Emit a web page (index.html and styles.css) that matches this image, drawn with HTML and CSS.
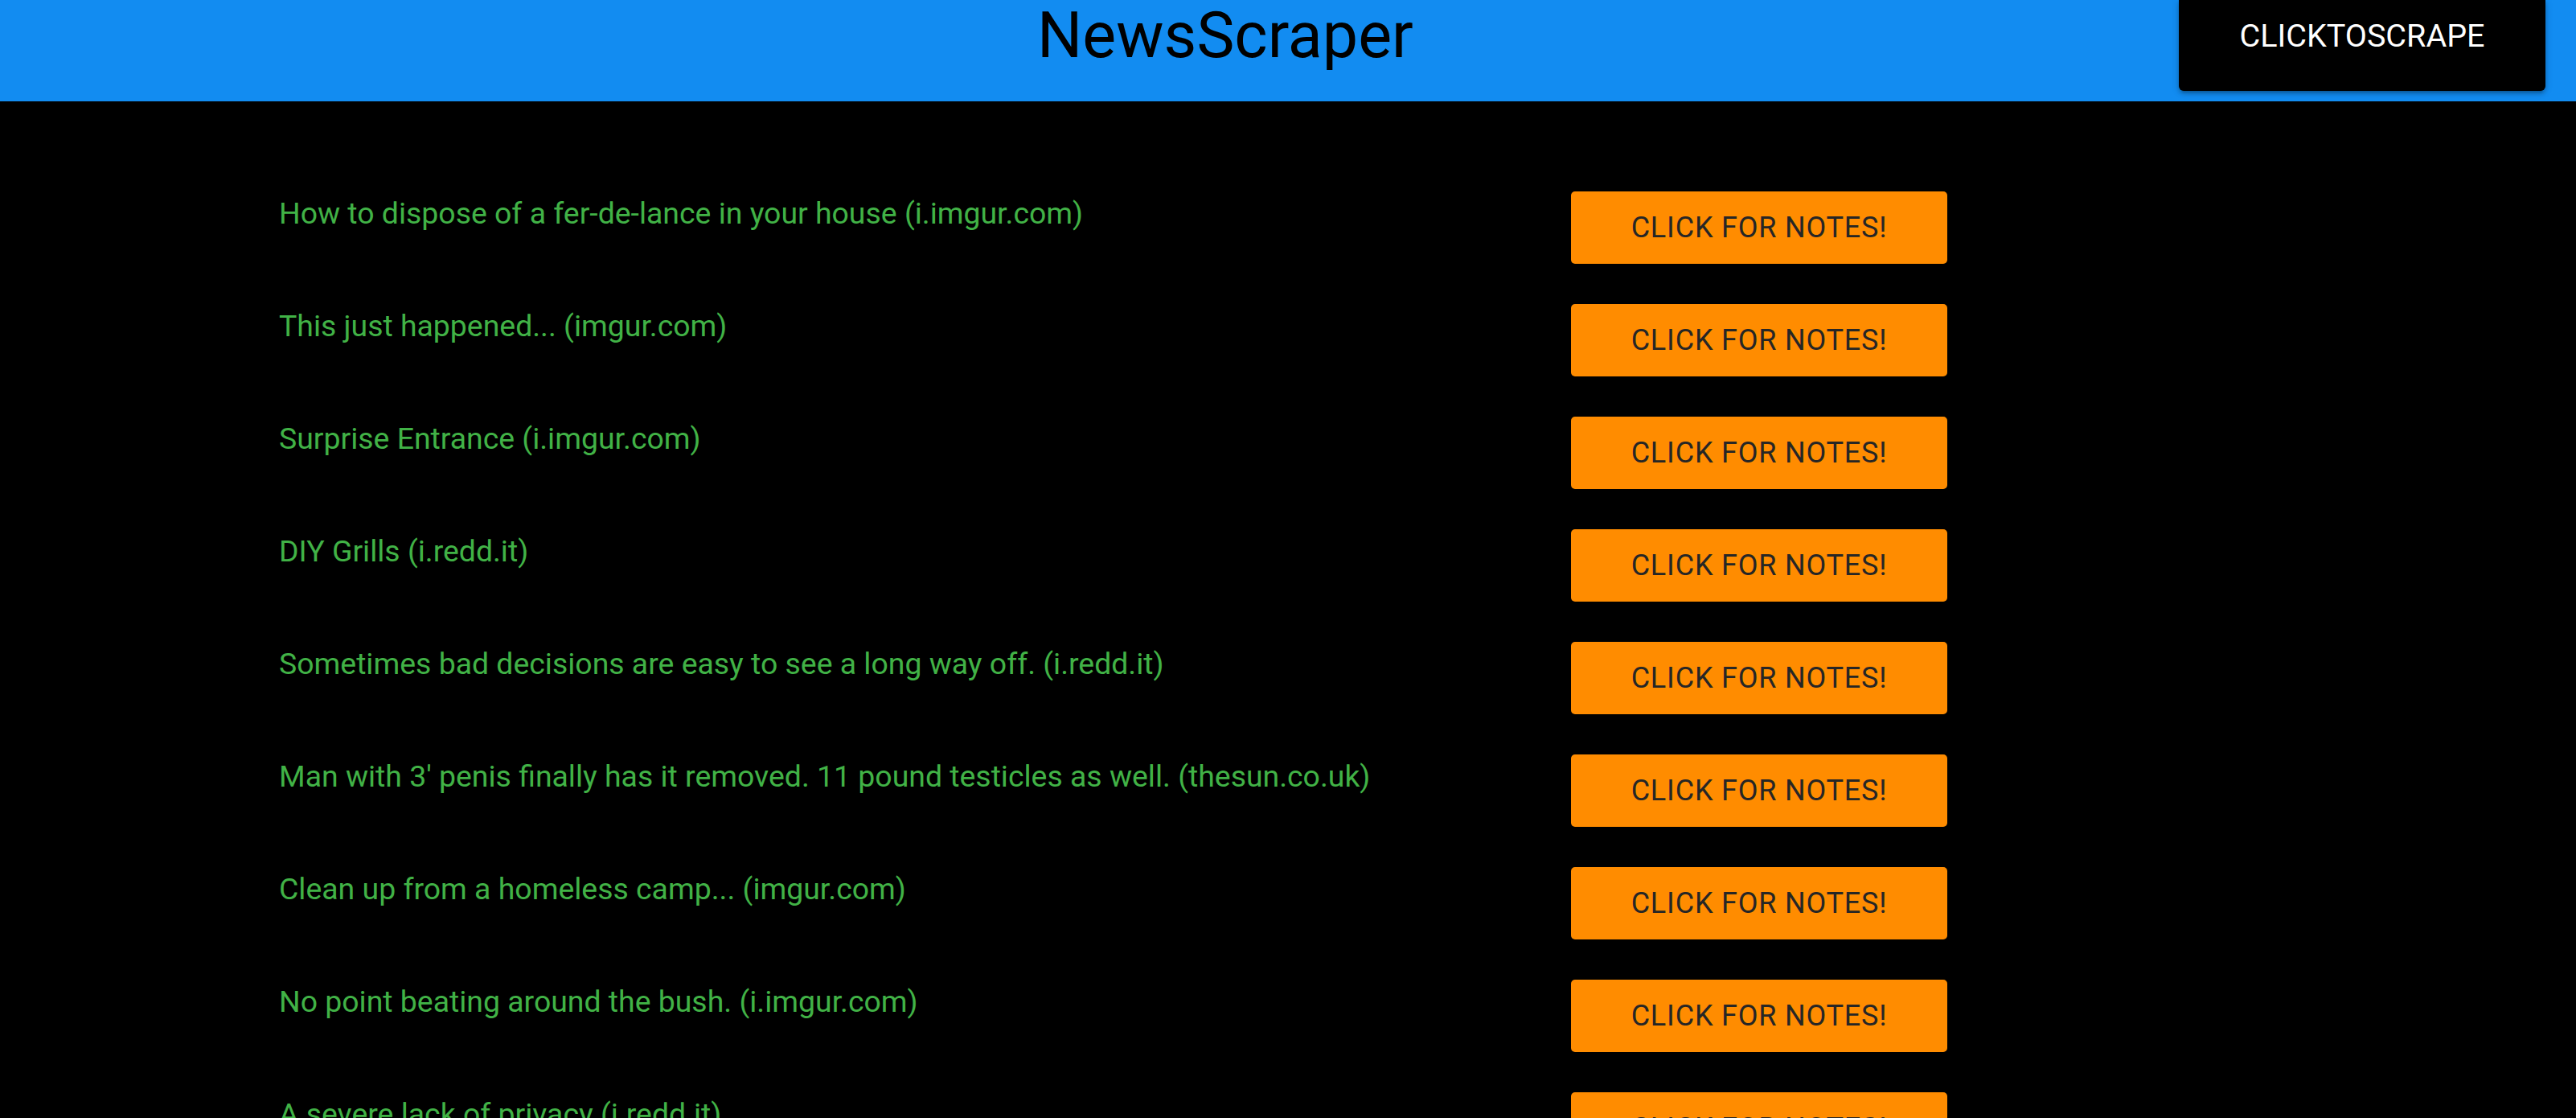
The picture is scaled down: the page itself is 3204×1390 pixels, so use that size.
FILE: index.html
```html
<!DOCTYPE html>
<html lang="en">
<head>
<meta charset="utf-8">
<title>NewsScraper</title>
<link rel="stylesheet" href="styles.css">
</head>
<body>
<header class="topbar">
  <h1 class="brand">NewsScraper</h1>
  <button class="scrape-btn">CLICKTOSCRAPE</button>
</header>
<main class="list">
  <div class="row"><p class="headline">How to dispose of a fer-de-lance in your house (i.imgur.com)</p><button class="notes-btn">CLICK FOR NOTES!</button></div>
  <div class="row"><p class="headline">This just happened... (imgur.com)</p><button class="notes-btn">CLICK FOR NOTES!</button></div>
  <div class="row"><p class="headline">Surprise Entrance (i.imgur.com)</p><button class="notes-btn">CLICK FOR NOTES!</button></div>
  <div class="row"><p class="headline">DIY Grills (i.redd.it)</p><button class="notes-btn">CLICK FOR NOTES!</button></div>
  <div class="row"><p class="headline">Sometimes bad decisions are easy to see a long way off. (i.redd.it)</p><button class="notes-btn">CLICK FOR NOTES!</button></div>
  <div class="row"><p class="headline">Man with 3' penis finally has it removed. 11 pound testicles as well. (thesun.co.uk)</p><button class="notes-btn">CLICK FOR NOTES!</button></div>
  <div class="row"><p class="headline">Clean up from a homeless camp... (imgur.com)</p><button class="notes-btn">CLICK FOR NOTES!</button></div>
  <div class="row"><p class="headline">No point beating around the bush. (i.imgur.com)</p><button class="notes-btn">CLICK FOR NOTES!</button></div>
  <div class="row"><p class="headline">A severe lack of privacy (i.redd.it)</p><button class="notes-btn">CLICK FOR NOTES!</button></div>
</main>
</body>
</html>
```
FILE: styles.css
```css
html, body {
  margin: 0;
  padding: 0;
  background: #000;
  font-family: Roboto, "Liberation Sans", sans-serif;
}

.topbar {
  height: 126px;
  background: #128cf1;
  display: flex;
  align-items: flex-start;
  justify-content: space-between;
  padding: 0 38px 0 1290px;
  box-sizing: border-box;
}

.brand {
  margin: 0;
  font-size: 79px;
  font-weight: 400;
  line-height: 89px;
  color: #000;
}

.scrape-btn {
  width: 456px;
  height: 113px;
  margin: 0;
  padding: 25px 0 0;
  border: none;
  border-radius: 0 0 6px 6px;
  background: #000;
  color: #fff;
  font-family: inherit;
  font-size: 39.5px;
  line-height: 40px;
  align-self: flex-start;
  display: flex;
  justify-content: center;
  align-items: flex-start;
  box-shadow: 0 4px 4px rgba(0,0,0,.14), 0 6px 2px -4px rgba(0,0,0,.12), 0 2px 10px rgba(0,0,0,.2);
}

.list {
  padding: 112px 0 0 347px;
}

.row {
  display: grid;
  grid-template-columns: 1607px 468px;
  align-items: start;
  margin-bottom: 50px;
}

.headline {
  margin: 0;
  font-size: 37.4px;
  line-height: 54px;
  color: #41b246;
}

.notes-btn {
  height: 90px;
  margin: 0;
  padding: 0;
  border: none;
  border-radius: 5px;
  background: #ff8c00;
  color: #262626;
  font-family: inherit;
  font-size: 36px;
  letter-spacing: 0.8px;
}
```
